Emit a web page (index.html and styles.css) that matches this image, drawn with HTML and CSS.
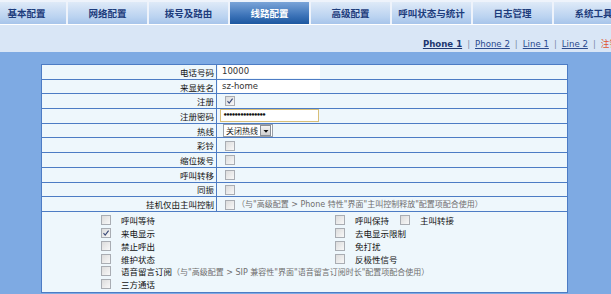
FILE: index.html
```html
<!DOCTYPE html>
<html lang="zh-CN">
<head>
    <meta charset="UTF-8">
    <title>线路配置</title>
    <link rel="stylesheet" href="styles.css">
</head>
<body>
    <!-- Menu utama -->
    <div class="nav">
        <div class="tab">基本配置</div>
        <div class="tab">网络配置</div>
        <div class="tab">拨号及路由</div>
        <div class="tab active">线路配置</div>
        <div class="tab">高级配置</div>
        <div class="tab">呼叫状态与统计</div>
        <div class="tab">日志管理</div>
        <div class="tab">系统工具</div>
    </div>

    <div class="subbar">
        <a class="link current" href="#">Phone 1</a><span class="sep">|</span>
        <a class="link" href="#">Phone 2</a><span class="sep">|</span>
        <a class="link" href="#">Line 1</a><span class="sep">|</span>
        <a class="link" href="#">Line 2</a><span class="sep">|</span>
        <a class="link logout" href="#">注销</a>
    </div>

    <div class="content">
        <table class="form-table">
            <tr>
                <td class="label">电话号码</td>
                <td class="value"><span class="field">10000</span></td>
            </tr>
            <tr>
                <td class="label">来显姓名</td>
                <td class="value"><span class="field">sz-home</span></td>
            </tr>
            <tr>
                <td class="label">注册</td>
                <td class="value"><span class="cb checked"><svg viewBox="0 0 10 10" width="10" height="10"><path d="M2.5 5.2 L4.2 7.2 L7.6 2.6" fill="none" stroke="#3a4a78" stroke-width="1.1"/></svg></span></td>
            </tr>
            <tr>
                <td class="label">注册密码</td>
                <td class="value"><span class="field password">•••••••••••••••</span></td>
            </tr>
            <tr>
                <td class="label">热线</td>
                <td class="value">
                    <span class="select">关闭热线<span class="arrow"><svg viewBox="0 0 8 8" width="8" height="8"><path d="M1.5 3 L6.5 3 L4 5.8 Z" fill="#111"/></svg></span></span>
                </td>
            </tr>
            <tr>
                <td class="label">彩铃</td>
                <td class="value"><span class="cb"></span></td>
            </tr>
            <tr>
                <td class="label">缩位拨号</td>
                <td class="value"><span class="cb"></span></td>
            </tr>
            <tr>
                <td class="label">呼叫转移</td>
                <td class="value"><span class="cb"></span></td>
            </tr>
            <tr>
                <td class="label">同振</td>
                <td class="value"><span class="cb"></span></td>
            </tr>
            <tr>
                <td class="label">挂机仅由主叫控制</td>
                <td class="value"><span class="cb"></span><span class="note">（与"高级配置 &gt; Phone 特性"界面"主叫控制释放"配置项配合使用）</span></td>
            </tr>
            <tr>
                <td class="options" colspan="2">
                    <div class="option-grid">
                        <div class="opt"><span class="cb"></span><span class="opt-text">呼叫等待</span></div>
                        <div class="opt"><span class="cb"></span><span class="opt-text short">呼叫保持</span><span class="cb"></span><span class="opt-text">主叫转接</span></div>
                        <div class="opt"><span class="cb checked"><svg viewBox="0 0 10 10" width="10" height="10"><path d="M2.5 5.2 L4.2 7.2 L7.6 2.6" fill="none" stroke="#3a4a78" stroke-width="1.1"/></svg></span><span class="opt-text">来电显示</span></div>
                        <div class="opt"><span class="cb"></span><span class="opt-text">去电显示限制</span></div>
                        <div class="opt"><span class="cb"></span><span class="opt-text">禁止呼出</span></div>
                        <div class="opt"><span class="cb"></span><span class="opt-text">免打扰</span></div>
                        <div class="opt"><span class="cb"></span><span class="opt-text">维护状态</span></div>
                        <div class="opt"><span class="cb"></span><span class="opt-text">反极性信号</span></div>
                        <div class="opt wide"><span class="cb"></span><span class="opt-text">语音留言订阅</span><span class="note">（与"高级配置 &gt; SIP 兼容性"界面"语音留言订阅时长"配置项配合使用）</span></div>
                        <div class="opt"><span class="cb"></span><span class="opt-text">三方通话</span></div>
                    </div>
                </td>
            </tr>
        </table>
    </div>
</body>
</html>
```

FILE: styles.css
```css
html, body {
    margin: 0;
    padding: 0;
}
body {
    width: 611px;
    height: 294px;
    overflow: hidden;
    background-color: #7eaae3;
    font-family: "DejaVu Sans", "Noto Sans CJK SC", sans-serif;
    font-size: 8.5px;
    color: #222;
}
.nav {
    display: flex;
    gap: 2px;
    margin-left: -13px;
    padding-top: 2px;
    height: 22px;
    background-color: #eef3fb;
    border-bottom: 1px solid #ffffff;
}
.tab {
    flex: 0 0 79px;
    display: flex;
    align-items: center;
    justify-content: center;
    background: linear-gradient(#dfeaf8, #b9d2f0 70%, #a7c4ea);
    color: #1d3c7c;
    font-family: "Noto Sans CJK SC", sans-serif;
    font-size: 9.5px;
    font-weight: bold;
}
.tab.active {
    background: linear-gradient(#7aa4d8, #3d74b9 60%, #1c57a0);
    color: #ffffff;
}
.subbar {
    display: flex;
    justify-content: flex-end;
    align-items: flex-end;
    height: 27px;
    margin-right: -7px;
    box-sizing: border-box;
    padding-bottom: 3px;
    background-color: #d9e6f6;
    font-size: 8.6px;
}
.link {
    color: #2a4a8e;
    text-decoration: underline;
}
.link.current {
    font-weight: bold;
    color: #1d3670;
}
.link.logout {
    color: #e0542e;
    text-decoration: none;
    font-family: "Noto Sans CJK SC", sans-serif;
}
.sep {
    color: #7a8aa8;
    margin: 0 5px;
}
.content {
    padding-top: 12px;
}
.form-table {
    margin-left: 41px;
    width: 527px;
    border-collapse: collapse;
    background-color: #eef7fc;
}
.form-table td {
    border: 1px solid #4d7cc4;
    height: 13.7px;
    padding: 0;
}
.label {
    width: 172px;
    text-align: right;
    padding-right: 2px !important;
    font-family: "Noto Sans CJK SC", sans-serif;
    color: #111;
}
.value {
    padding-left: 1px !important;
    white-space: nowrap;
}
.field {
    display: inline-block;
    vertical-align: middle;
    width: 98px;
    height: 13px;
    line-height: 13px;
    padding-left: 4px;
    background-color: #ffffff;
    color: #333;
}
.field.password {
    width: 95px;
    height: 11px;
    line-height: 11px;
    margin-left: 2px;
    border: 1px solid #d8bf78;
    padding-left: 2px;
    font-size: 7px;
    font-weight: bold;
    letter-spacing: -1.7px;
    color: #111;
}
.cb {
    display: inline-block;
    vertical-align: middle;
    width: 8px;
    height: 8px;
    margin-left: 7px;
    border: 1px solid #a9adb3;
    background: linear-gradient(135deg, #dcdcdc, #f8f8f8);
    position: relative;
}
.cb svg {
    position: absolute;
    left: -1px;
    top: -1px;
}
.note {
    margin-left: 2px;
    color: #6e6e6e;
    font-family: "DejaVu Sans", "Noto Sans CJK SC", sans-serif;
    font-size: 8px;
}
.select {
    display: inline-flex;
    align-items: center;
    vertical-align: middle;
    height: 11px;
    margin-left: 5px;
    padding-left: 2px;
    border: 1px solid #9aa0a8;
    background-color: #ffffff;
    font-family: "Noto Sans CJK SC", sans-serif;
    font-size: 8px;
    color: #222;
}
.arrow {
    display: inline-flex;
    align-items: center;
    justify-content: center;
    width: 9px;
    height: 9px;
    margin-left: 2px;
    margin-right: 1px;
    border: 1px solid #8a8f96;
    background: linear-gradient(#f4f4f4, #d0d0d0);
}
.form-table td.options {
    height: 78px;
    padding: 2px 0 0 59px;
    vertical-align: top;
}
.option-grid {
    display: grid;
    grid-template-columns: 234px 1fr;
    grid-auto-rows: 12.8px;
    align-items: center;
}
.opt {
    display: flex;
    align-items: center;
    white-space: nowrap;
    font-family: "Noto Sans CJK SC", sans-serif;
}
.opt.wide {
    grid-column: span 2;
}
.opt .cb {
    margin-left: 0;
}
.opt-text {
    margin-left: 10px;
    color: #111;
}
.opt-text.short {
    width: 36px;
    margin-right: 9px;
}
.opt .note {
    margin-left: 0;
}
```
